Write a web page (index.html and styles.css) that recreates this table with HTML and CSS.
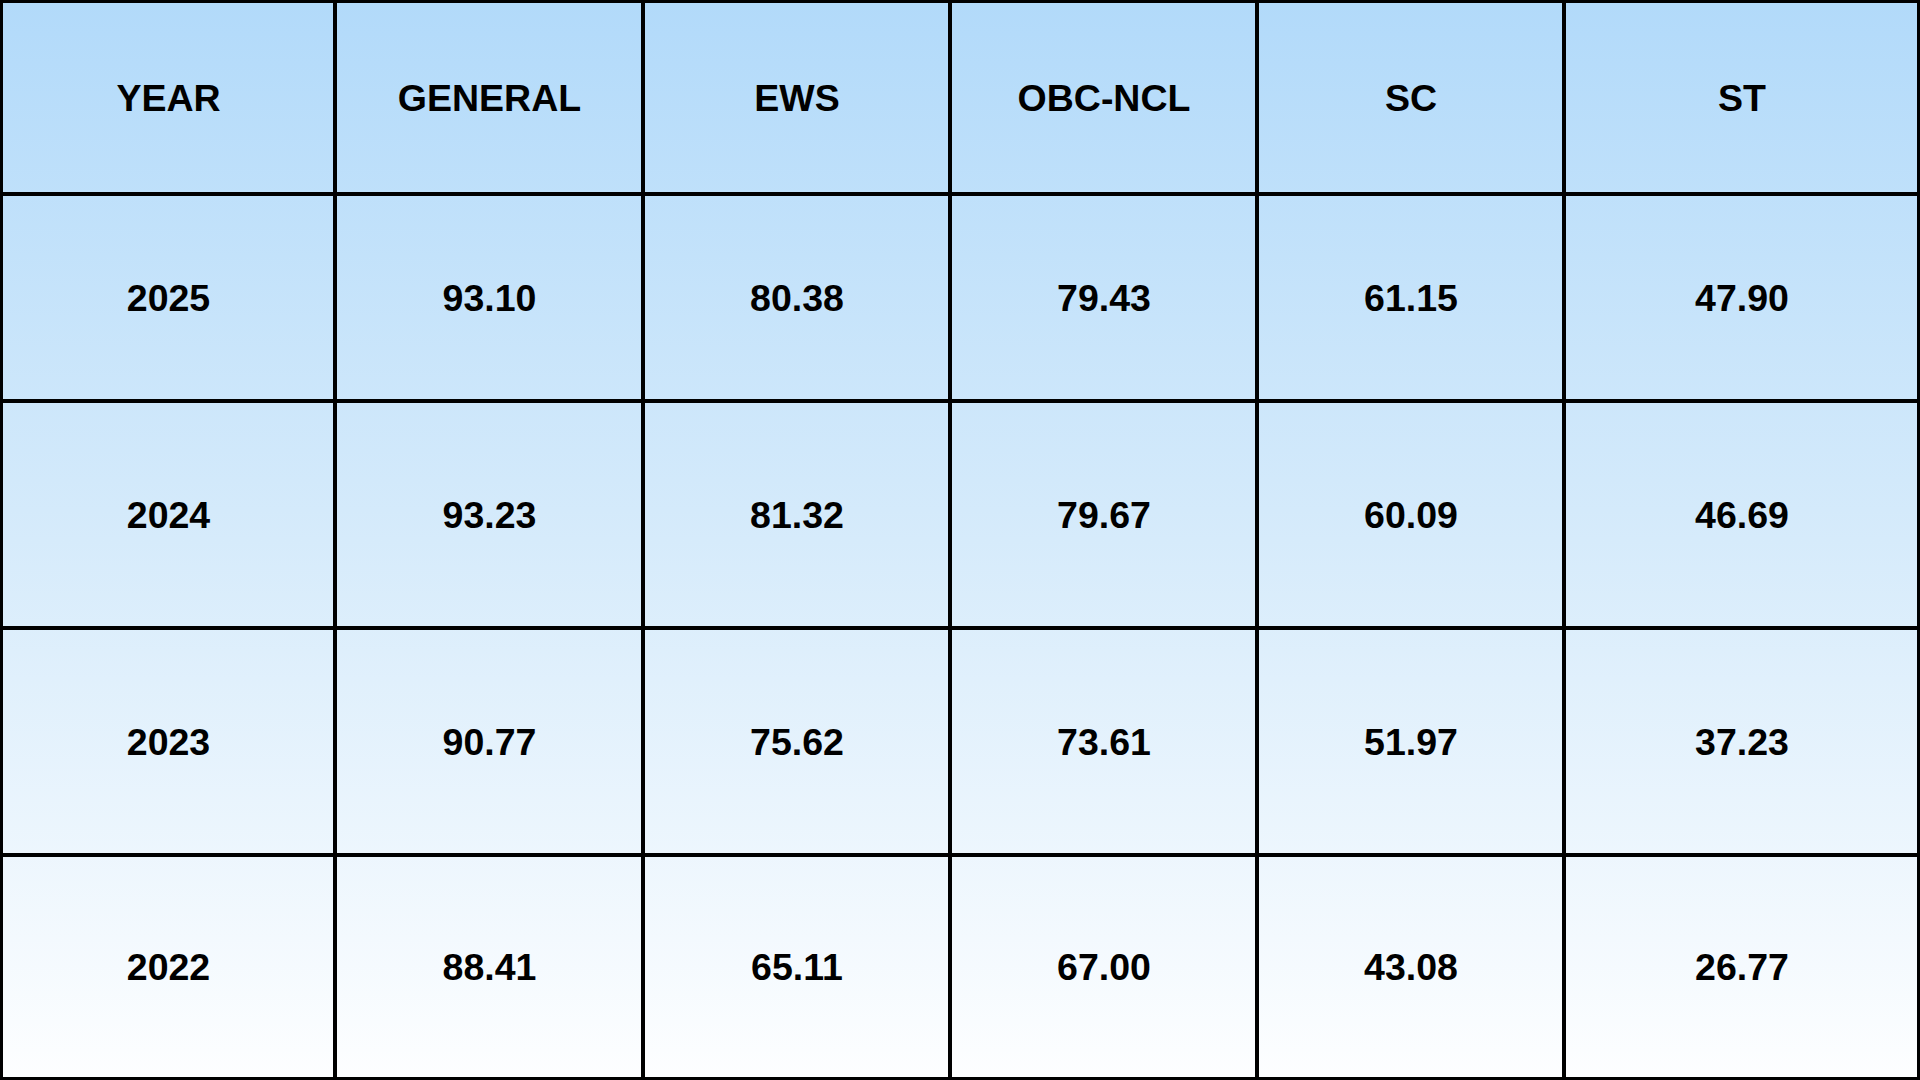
FILE: index.html
```html
<!DOCTYPE html>
<html lang="en">
<head>
<meta charset="utf-8">
<title>Cutoff Table</title>
<link rel="stylesheet" href="styles.css">
</head>
<body>
<div class="table" role="table">
  <div class="cell head" role="columnheader">YEAR</div>
  <div class="cell head" role="columnheader">GENERAL</div>
  <div class="cell head" role="columnheader">EWS</div>
  <div class="cell head" role="columnheader">OBC-NCL</div>
  <div class="cell head" role="columnheader">SC</div>
  <div class="cell head last-col" role="columnheader">ST</div>

  <div class="cell" role="cell">2025</div>
  <div class="cell" role="cell">93.10</div>
  <div class="cell" role="cell">80.38</div>
  <div class="cell" role="cell">79.43</div>
  <div class="cell" role="cell">61.15</div>
  <div class="cell last-col" role="cell">47.90</div>

  <div class="cell" role="cell">2024</div>
  <div class="cell" role="cell">93.23</div>
  <div class="cell" role="cell">81.32</div>
  <div class="cell" role="cell">79.67</div>
  <div class="cell" role="cell">60.09</div>
  <div class="cell last-col" role="cell">46.69</div>

  <div class="cell" role="cell">2023</div>
  <div class="cell" role="cell">90.77</div>
  <div class="cell" role="cell">75.62</div>
  <div class="cell" role="cell">73.61</div>
  <div class="cell" role="cell">51.97</div>
  <div class="cell last-col" role="cell">37.23</div>

  <div class="cell last-row" role="cell">2022</div>
  <div class="cell last-row" role="cell">88.41</div>
  <div class="cell last-row" role="cell">65.11</div>
  <div class="cell last-row" role="cell">67.00</div>
  <div class="cell last-row" role="cell">43.08</div>
  <div class="cell last-row last-col" role="cell">26.77</div>
</div>
</body>
</html>
```

FILE: styles.css
```css
* {
  box-sizing: border-box;
}

html, body {
  margin: 0;
  padding: 0;
  width: 1920px;
  height: 1080px;
  overflow: hidden;
  background: #ffffff;
}

.table {
  width: 1920px;
  height: 1080px;
  display: grid;
  grid-template-columns: 334px 308px 307px 307px 307px 351px;
  grid-template-rows: 193px 207px 227px 227px 220px;
  border: 3px solid #000000;
  background: linear-gradient(to bottom, #b2dafa 0%, #d6ebfb 50%, #fdfeff 100%);
  font-family: "Liberation Sans", Arial, sans-serif;
  font-weight: bold;
  color: #000000;
}

.cell {
  display: flex;
  align-items: center;
  justify-content: center;
  padding-top: 1px;
  padding-left: 1px;
  border-right: 4px solid #000000;
  border-bottom: 4px solid #000000;
  font-size: 37.5px;
}

.last-col {
  border-right: none;
}

.last-row {
  border-bottom: none;
}
```
